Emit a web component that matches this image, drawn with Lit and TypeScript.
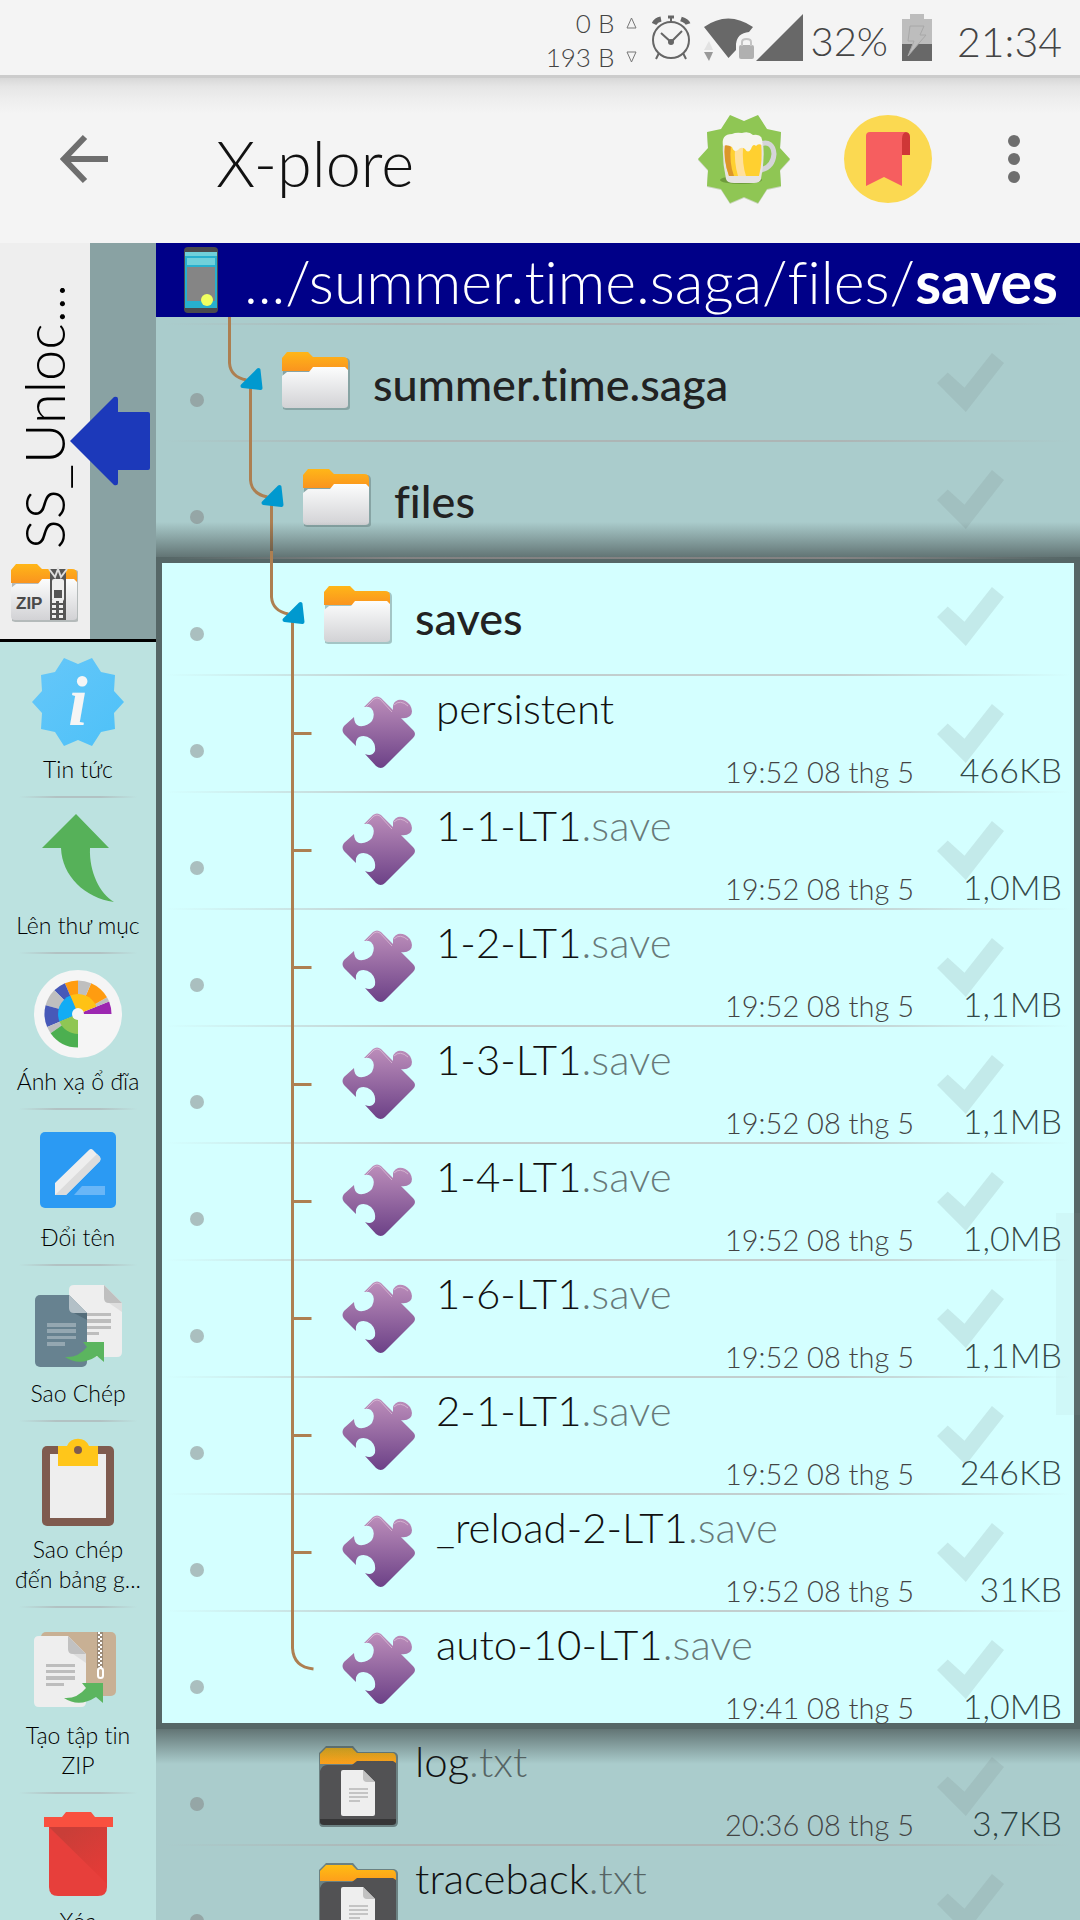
import { LitElement, html, svg, css, nothing } from "lit";
import { customElement, property } from "lit/decorators.js";

type Kind = "folder" | "puzzle" | "doc";
interface Entry {
  level: number;
  kind: Kind;
  name: string;
  ext?: string;
  date?: string;
  size?: string;
  line: "branch" | "tick" | "end" | "none";
}

const save = (name: string, size: string, date = "19:52 08 thg 5", line: Entry["line"] = "tick"): Entry => ({
  level: 3, kind: "puzzle", name, ext: ".save", date, size, line,
});

const parents: Entry[] = [
  { level: 0, kind: "folder", name: "summer.time.saga", line: "branch" },
  { level: 1, kind: "folder", name: "files", line: "branch" },
];
const current: Entry[] = [
  { level: 2, kind: "folder", name: "saves", line: "branch" },
  { level: 3, kind: "puzzle", name: "persistent", date: "19:52 08 thg 5", size: "466KB", line: "tick" },
  save("1-1-LT1", "1,0MB"),
  save("1-2-LT1", "1,1MB"),
  save("1-3-LT1", "1,1MB"),
  save("1-4-LT1", "1,0MB"),
  save("1-6-LT1", "1,1MB"),
  save("2-1-LT1", "246KB"),
  save("_reload-2-LT1", "31KB"),
  save("auto-10-LT1", "1,0MB", "19:41 08 thg 5", "end"),
];
const after: Entry[] = [
  { level: 2, kind: "doc", name: "log", ext: ".txt", date: "20:36 08 thg 5", size: "3,7KB", line: "none" },
  { level: 2, kind: "doc", name: "traceback", ext: ".txt", line: "none" },
];

const BADGE =
  "2,46 12,57 11,73 25,76 34,90 48,84 62,90 71,76 85,73 84,57 94,46 84,35 85,19 71,16 62,2 48,8 34,2 25,16 11,19 12,35";

/** Ring segment of the disk map, angles in degrees counter-clockwise from east. */
const wedge = (from: number, to: number, r: number, fill: string) => {
  const p = (a: number) =>
    `${(48 + r * Math.cos((a * Math.PI) / 180)).toFixed(1)} ${(46 - r * Math.sin((a * Math.PI) / 180)).toFixed(1)}`;
  return svg`<path fill=${fill} d="M48 46L${p(from)}A${r} ${r} 0 0 0 ${p(to)}Z"/>`;
};

const copyArrow = svg`<path fill="#5bb55f" d="M35 77Q48 78 57 67L53 62H74V82L67 76Q50 87 35 77Z"/>`;

const toolIcons: Record<string, unknown> = {
  info: svg`
    <defs><linearGradient id="g" x1="0" y1="0" x2="1" y2="1"><stop stop-color="#66c7f9"/><stop offset="1" stop-color="#4dc1f8"/></linearGradient></defs>
    <polygon points=${BADGE} fill="url(#g)"/>
    <text x="48" y="69" text-anchor="middle" font-family="Liberation Serif, serif" font-size="70" font-style="italic" font-weight="700" fill="#f5f5f5">i</text>`,
  up: svg`<path fill="#56b159" d="M46 2L79 36H60C59 60 70 82 84 90C55 86 32 64 31 36H12Z"/>`,
  map: svg`
    <circle cx="48" cy="46" r="44" fill="#f5f5f5"/>
    ${wedge(0, 22, 33.5, "#9c27b0")}${wedge(22, 30, 33.5, "#bfbfbf")}${wedge(30, 67, 33.5, "#ff9c10")}
    ${wedge(67, 90, 33.5, "#bfbfbf")}${wedge(90, 113, 33.5, "#ff9c10")}${wedge(113, 135, 33.5, "#4759b8")}
    ${wedge(135, 165, 33.5, "#bfbfbf")}${wedge(165, 203, 33.5, "#4759b8")}${wedge(203, 215, 33.5, "#bfbfbf")}
    ${wedge(215, 270, 33.5, "#4caf50")}${wedge(22, 113, 20, "#ffc215")}${wedge(113, 202, 20, "#12acf5")}
    ${wedge(202, 270, 20, "#8fc654")}
    <circle cx="48" cy="46" r="6" fill="#f5f5f5"/>`,
  rename: svg`
    <rect x="10" y="8" width="76" height="76" rx="5" fill="#2b9af3"/>
    <path fill="#eee" d="M25 71V59L59 26Q61 24 63 26L70 33Q71 35 70 37L36 71Z"/>
    <path fill="#dcdcdc" d="M25 71L67 30L70 33Q71 35 70 37L36 71Z"/>
    <path fill="#69b6f7" d="M44 71L52 62H75V71Z"/>`,
  copy: svg`
    <rect x="5" y="15" width="52" height="72" rx="5" fill="#678290"/>
    <path fill="#eee" d="M44 5H74L92 23V72Q92 77 87 77H57V33L39 15V10Q39 5 44 5Z"/>
    <path fill="#b3c0c7" d="M39 15L57 33H44Q39 33 39 28Z"/>
    <path fill="#546d7a" d="M44 33H57V40Z"/>
    <path fill="#bfbfbf" d="M74 5L92 23H79Q74 23 74 18Z"/>
    <path fill="#dedede" d="M79 23H92V32Z"/>
    <path fill="#94a7b1" d="M17 43h29v4H17zM17 49h29v4H17zM17 56h29v3H17zM17 62h18v4H17z"/>
    <path fill="#bdbdbd" d="M57 33h24v3H57zM57 39h24v4H57zM57 46h24v3H57zM57 52h12v3H57z"/>
    ${copyArrow}`,
  clip: svg`
    <rect x="12" y="10" width="72" height="80" rx="5" fill="#7f5b4f"/>
    <rect x="20" y="18" width="56" height="64" fill="#eee"/>
    <path fill="#ffc61a" d="M28 10H37A12 12 0 0 1 59 10H68V30H28Z"/>
    <circle cx="48" cy="14" r="4" fill="#7f5b4f"/>`,
  pack: svg`
    <rect x="11" y="10" width="75" height="64" rx="5" fill="#c8b094"/>
    <path d="M70 10V46" stroke="#9c8b78" stroke-width="6"/>
    <path d="M69 10V46" stroke="#fff" stroke-width="2" stroke-dasharray="2 2"/>
    <path d="M71 12V46" stroke="#fff" stroke-width="2" stroke-dasharray="2 2"/>
    <rect x="68" y="46" width="5" height="10" rx="2.5" fill="none" stroke="#fff" stroke-width="2"/>
    <path fill="#eee" d="M9 14H38L56 32V80Q56 85 51 85H9Q4 85 4 80V19Q4 14 9 14Z"/>
    <path fill="#c1c1c1" d="M38 14L56 32H43Q38 32 38 27Z"/>
    <path fill="#dedede" d="M43 32H56V41Z"/>
    <path fill="#bdbdbd" d="M16 42h29v3H16zM16 48h29v3H16zM16 54h29v4H16zM16 61h18v3H16z"/>
    <g transform="translate(-1 -1)">${copyArrow}</g>`,
  trash: svg`
    <defs><linearGradient id="s" x1="0.4" y1="0" x2="1" y2="0.8"><stop stop-color="#c93e38"/><stop offset="1" stop-color="#e53b37"/></linearGradient></defs>
    <path fill="#e73f3b" d="M19 18H77V79Q77 88 68 88H28Q19 88 19 79Z"/>
    <path fill="url(#s)" d="M19 19H77V76Z"/>
    <path fill="#f9503f" d="M14 9H32L36 4H61L65 9H83V19H14Z"/>`,
};

const tools = [
  ["info", "Tin tức"],
  ["up", "Lên thư mục"],
  ["map", "Ánh xạ ổ đĩa"],
  ["rename", "Đổi tên"],
  ["copy", "Sao Chép"],
  ["clip", "Sao chép đến bảng g..."],
  ["pack", "Tạo tập tin ZIP"],
  ["trash", "Xóa"],
];

const folderArt = svg`
  <path fill="#48585a" opacity=".35" d="M8 70V18H30L38 19H72Q75 20 75 24V68Q75 71 71 71H11Z"/>
  <path fill="url(#fo)" d="M7 36V19L12 13H33L38 18H68Q73 18 73 23V32H7Z"/>
  <path fill="url(#fw)" d="M7 37L12 33H34L38 28H70L73 31V66Q73 69 69 69H11Q7 69 7 65Z"/>`;

const folderGradients = svg`<defs>
  <linearGradient id="fo" x2="0" y2="1"><stop stop-color="#ffb618"/><stop offset="1" stop-color="#f98d20"/></linearGradient>
  <linearGradient id="fw" x2="0" y2="1"><stop stop-color="#fcfdfd"/><stop offset="1" stop-color="#d2d2d5"/></linearGradient>
</defs>`;

const fileIcons: Record<Kind, { box: string; art: unknown }> = {
  folder: { box: "1 3 80 81", art: svg`${folderGradients}${folderArt}` },
  puzzle: {
    box: "0 0 80 81",
    art: svg`
    <defs><linearGradient id="pz" x2="0" y2="1"><stop stop-color="#bd8fbb"/><stop offset="1" stop-color="#6c4187"/></linearGradient></defs>
    <path fill="url(#pz)" d="M25 14L34 5Q38 2 42 5L54 17Q53 9 59 7Q66 6 71 12Q75 19 71 23Q67 26 62 25L74 37Q78 41 74 45L46 73Q42 77 37 73L26 61Q33 64 36 58Q37 51 32 46Q26 41 20 44Q16 47 17 53L5 41Q2 37 5 33L15 24Q15 31 20 33Q28 34 33 28Q37 20 32 15Q29 13 25 14Z"/>
    <path fill="none" stroke="#d3b2d0" stroke-width="1" d="M27 14L35 6Q38 4 41 6L53 19M55 12Q61 6 69 13"/>`,
  },
  doc: {
    box: "0 0 80 81",
    art: svg`
    <defs><linearGradient id="dk" x2="0" y2="1"><stop stop-color="#ffbd12"/><stop offset="1" stop-color="#fd9020"/></linearGradient></defs>
    <path fill="#2c3638" opacity=".5" d="M1 7L8 0H35L40 6H76Q80 7 80 11V76Q80 81 75 81H5Q1 81 1 76Z"/>
    <path fill="url(#dk)" d="M2 26V8L8 2H34L39 7H74Q78 7 78 12V18H2Z"/>
    <path fill="#525254" d="M2 25Q4 19 9 19H34L39 15H75L78 17V73H2Z"/>
    <path fill="#363637" d="M2 73H78V76Q78 79 74 79H6Q2 79 2 76Z"/>
    <path fill="#eee" d="M25 24H45L57 36V68Q57 70 55 70H25Q23 70 23 68V26Q23 24 25 24Z"/>
    <path fill="#c1c1c1" d="M45 24L57 36H49Q45 36 45 32Z"/>
    <path fill="#c4c4c4" d="M31 42h19v2H31zM31 46h19v2H31zM31 50h19v2H31zM31 54h11v2H31z"/>`,
  },
};

@customElement("file-row")
class FileRow extends LitElement {
  @property({ attribute: false }) entry!: Entry;

  static styles = css`
    :host {
      display: flex;
      height: 117px;
      box-sizing: border-box;
      padding-top: 2px;
      flex: none;
      background: linear-gradient(90deg, transparent 1%, rgba(176, 158, 158, 0.5) 26%, rgba(176, 158, 158, 0.5) 74%, transparent 99%)
        0 0 / 100% 2px no-repeat;
    }
    .tree {
      flex: none;
      height: 117px;
      margin-top: -2px;
      overflow: visible;
    }
    .icon {
      flex: none;
      align-self: center;
      width: 80px;
      height: 81px;
      margin-right: 17px;
    }
    .text {
      flex: 1;
      min-width: 0;
      display: flex;
      flex-direction: column;
      justify-content: space-between;
      white-space: nowrap;
    }
    .name {
      font-size: 42px;
      line-height: 48px;
      padding-top: 8px;
      color: #111;
    }
    .ext {
      color: rgba(30, 30, 30, 0.6);
    }
    .folder {
      justify-content: center;
    }
    .folder .name {
      font-weight: 500;
      font-size: 45px;
      padding-top: 2px;
      color: #222;
    }
    .date {
      align-self: flex-end;
      font-size: 29px;
      line-height: 38px;
      color: #444;
    }
    .side {
      flex: none;
      display: grid;
      width: 166px;
      box-sizing: border-box;
      padding: 0 18px 0 23px;
    }
    .check {
      grid-area: 1 / 1;
      appearance: none;
      margin: 28px 0 0;
      width: 67px;
      height: 59px;
      background: rgba(120, 140, 140, 0.18);
      clip-path: polygon(0 51%, 16% 33%, 41% 59%, 82% 0, 100% 17%, 43% 100%);
    }
    .size {
      grid-area: 1 / 1;
      align-self: end;
      justify-self: end;
      font-size: 34px;
      line-height: 42px;
      color: rgba(20, 40, 40, 0.85);
    }
  `;

  private tree(e: Entry, w: number) {
    const x = 73.5 + 21 * e.level;
    const line = {
      branch: svg`
        <path d="M${x} -6V40Q${x + 1} 54 ${x + 17} 57"/>
        <path d="M${x + 21} 62V117"/>
        <path fill="#0099cf" stroke="#0099cf" stroke-width="4" stroke-linejoin="round" d="M${x + 13} 63L${x + 29} 47L${x + 31} 65Z"/>`,
      tick: svg`<path d="M${x} 0V117M${x} 59.5H${x + 19}"/>`,
      end: svg`<path d="M${x} 0V38Q${x + 1} 57 ${x + 21} 59"/>`,
      none: nothing,
    }[e.line];
    return html`<svg class="tree" width=${w} height="117" viewBox="0 0 ${w} 117" aria-hidden="true">
      <circle cx="41" cy="77" r="7" fill="rgba(128,128,128,.5)" />
      <g fill="none" stroke="#ad7f51" stroke-width="3">${line}</g>
    </svg>`;
  }

  render() {
    const e = this.entry;
    const icon = fileIcons[e.kind];
    return html`
      ${this.tree(e, 120 + e.level * 21)}
      <svg class="icon" viewBox=${icon.box} aria-hidden="true">${icon.art}</svg>
      <div class="text ${e.kind}">
        <span class="name">${e.name}<span class="ext">${e.ext ?? ""}</span></span>
        ${e.date ? html`<span class="date">${e.date}</span>` : nothing}
      </div>
      <div class="side">
        <input class="check" type="checkbox" aria-label=${e.name} />
        ${e.size ? html`<span class="size">${e.size}</span>` : nothing}
      </div>
    `;
  }
}

@customElement("app-root")
class AppRoot extends LitElement {
  static styles = css`
    :host {
      display: flex;
      flex-direction: column;
      height: 100vh;
      overflow: hidden;
      background: #f4f4f4;
      font-family: Lato, "Open Sans", sans-serif;
      font-weight: 300;
      font-variant-ligatures: none;
    }
    button {
      font: inherit;
      color: inherit;
      background: none;
      border: 0;
      padding: 0;
      margin: 0;
    }
    svg {
      display: block;
      flex: none;
    }
    .status {
      display: flex;
      align-items: center;
      justify-content: flex-end;
      height: 75px;
      flex: none;
      padding-right: 18px;
      border-bottom: 3px solid #ccc;
      color: #444;
      white-space: nowrap;
    }
    .net {
      display: grid;
      grid-template-columns: auto 11px;
      column-gap: 12px;
      align-items: center;
      justify-items: end;
      font-size: 26px;
      line-height: 34px;
      padding-top: 5px;
      margin-right: 15px;
    }
    .sysicons {
      margin-right: 6px;
    }
    .percent {
      font-size: 40px;
      line-height: 48px;
      padding-top: 6px;
      margin-right: 14px;
    }
    .clock {
      font-size: 41px;
      line-height: 52px;
      padding-top: 8px;
      margin-left: 25px;
    }
    .header {
      display: flex;
      align-items: center;
      height: 165px;
      flex: none;
      box-sizing: border-box;
      padding: 0 58px 4px 60px;
      background: linear-gradient(#d8d8d8, #e6e6e6 9px, #ededed 20px, #f4f4f4 35px);
    }
    .title {
      flex: 1;
      margin: 0 0 0 106px;
      padding-top: 8px;
      font-size: 63px;
      line-height: 72px;
      font-weight: 300;
      color: #111;
    }
    .actions {
      display: flex;
      align-items: center;
    }
    .beer {
      margin-right: 52px;
    }
    .mark {
      margin-right: 74px;
    }
    .body {
      flex: 1;
      min-height: 0;
      display: flex;
    }
    .left {
      width: 156px;
      flex: none;
      display: flex;
      flex-direction: column;
      overflow: hidden;
      background: #bce2e0;
    }
    .other {
      position: relative;
      flex: none;
      height: 396px;
      border-bottom: 3px solid #000;
      background: linear-gradient(90deg, #eee 90px, #89a2a3 90px);
    }
    .tab {
      width: 90px;
      height: 100%;
      box-sizing: border-box;
      padding: 0 2px 16px 0;
      display: flex;
      flex-direction: column;
      align-items: center;
      justify-content: flex-end;
      gap: 14px;
    }
    .tabname {
      writing-mode: vertical-rl;
      transform: rotate(180deg);
      font-size: 56px;
      line-height: 68px;
      color: #000;
      white-space: nowrap;
    }
    .swap {
      position: absolute;
      left: 70px;
      top: 153px;
    }
    .tools {
      display: flex;
      flex-direction: column;
    }
    .tool {
      display: flex;
      flex-direction: column;
      align-items: center;
      flex: none;
      gap: 6px;
      padding: 14px 12px;
      background: linear-gradient(90deg, transparent 12%, #b2c2c3 36%, #b2c2c3 64%, transparent 88%) 0 100% / 100% 2px
        no-repeat;
    }
    .label {
      font-size: 23px;
      line-height: 30px;
      color: #000;
    }
    .main {
      flex: 1;
      min-width: 0;
      display: flex;
      flex-direction: column;
      background: #aacccc;
      position: relative;
    }
    .path {
      display: flex;
      align-items: center;
      justify-content: space-between;
      height: 74px;
      flex: none;
      box-sizing: border-box;
      padding: 0 22px 0 28px;
      background: #000088;
      color: #fff;
      font-size: 59px;
      line-height: 74px;
      white-space: nowrap;
    }
    .crumbs {
      padding-top: 4px;
    }
    .crumbs b {
      font-weight: 700;
    }
    .list {
      flex: 1;
      min-height: 0;
      overflow: hidden;
      display: flex;
      flex-direction: column;
      padding-top: 6px;
    }
    .group {
      position: relative;
      z-index: 0;
      display: flex;
      flex-direction: column;
      flex: none;
    }
    .group::before {
      content: "";
      position: absolute;
      z-index: -1;
      inset: 0 0 -2px 0;
      border: 6px solid #566767;
      background: #d4ffff;
      box-sizing: border-box;
    }
    .group::after {
      content: "";
      position: absolute;
      z-index: -2;
      inset: -35px 0 -37px 0;
      background: linear-gradient(rgba(60, 70, 70, 0), rgba(60, 70, 70, 0.65) 35px) 0 0 / 100% 35px no-repeat,
        linear-gradient(rgba(60, 70, 70, 0.65), rgba(60, 70, 70, 0)) 0 100% / 100% 35px no-repeat;
    }
    .thumb {
      position: absolute;
      right: 0;
      top: 970px;
      width: 24px;
      height: 202px;
      background: rgba(150, 170, 170, 0.08);
    }
  `;

  render() {
    const rows = (list: Entry[]) => list.map((e) => html`<file-row .entry=${e}></file-row>`);
    return html`
      <div class="status">
        <div class="net">
          <span>0 B</span>
          <svg width="11" height="12" viewBox="0 0 11 12"><path d="M1 11L5.500 1L10 11Z" fill="none" stroke="#777" /></svg>
          <span>193 B</span>
          <svg width="11" height="12" viewBox="0 0 11 12"><path d="M1 1L5.500 11L10 1Z" fill="none" stroke="#777" /></svg>
        </div>
        <svg class="sysicons" width="152" height="50" viewBox="653 13 152 50" aria-hidden="true">
          <g fill="none" stroke="#666" stroke-width="2">
            <circle cx="672" cy="40" r="18" />
            <path d="M662 33L672 42L683 31" stroke-width="2" />
            <path d="M672 17V22M660 53L657 59M684 53L687 59" />
            <path d="M669 17H675" stroke-width="3" />
            <path d="M655 24Q657 20 662 19M682 19Q688 21 689 24" stroke-width="5" />
          </g>
          <circle cx="672" cy="42" r="3" fill="#666" />
          <path fill="#686868" d="M705 27Q729 10 754 27L750 32Q738 33 737 44V50L729.500 58Z" />
          <path fill="#e2e2e2" d="M705 50L710 41L714 50Z" />
          <path fill="#999" d="M705 52H714L710 61Z" />
          <rect x="740" y="45" width="15" height="14" rx="2" fill="#b0b0b0" />
          <path d="M743 46V42Q743 39 747.500 39Q752 39 752 42V46" fill="none" stroke="#c4c4c4" stroke-width="2" />
          <path fill="#686868" d="M757 61L804 14V61Z" />
        </svg>
        <span class="percent">32%</span>
        <svg width="30" height="48" viewBox="0 0 30 48" aria-hidden="true">
          <path fill="#bdbdbd" d="M0 5H8V0H22V5H30V31H0Z" />
          <path fill="#686868" d="M0 30H30V47H0Z" />
          <path fill="#bdbdbd" stroke="#a8a8a8" d="M8 12H22L18 21H24L6 42L12 27H6Z" />
        </svg>
        <span class="clock">21:34</span>
      </div>

      <header class="header">
        <button aria-label="Back">
          <svg width="50" height="50" viewBox="0 0 50 50">
            <path d="M25 3L4 25L25 47M4 25H48" fill="none" stroke="#6e6e6e" stroke-width="6" />
          </svg>
        </button>
        <h1 class="title">X-plore</h1>
        <div class="actions">
          <button class="beer" aria-label="Donate">
            <svg width="96" height="92" viewBox="0 0 96 92">
              <polygon points=${BADGE} fill="#5f8a33" opacity=".3" transform="translate(0 1)" />
              <polygon points=${BADGE} fill="#8fc654" />
              <ellipse cx="45" cy="67" rx="21" ry="4" fill="#6e9c3c" />
              <path d="M64 31Q77 27 78 41Q77 54 65 57" fill="none" stroke="#d5d5d8" stroke-width="5" />
              <path d="M27 30H67Q69 46 65 66Q64 70 58 70H38Q31 70 30 66Q26 48 27 30Z" fill="#e6e4e2" />
              <path d="M29 30H65Q67 47 63 63H33Q27 46 29 30Z" fill="#ffd030" />
              <path d="M29 32H35Q33 50 38 63H33Q27 46 29 32Z" fill="#dc962a" />
              <path d="M39 34H47Q46 51 50 63H42Q38 50 39 34Z" fill="#ffe09c" />
              <path d="M27 33Q25 21 36 21Q40 19 46 20Q53 18 57 22Q68 20 66 32Q62 30 60 33Q57 30 55 36Q52 41 49 36Q45 33 42 37Q38 40 36 34Q31 31 27 33Z" fill="#f6f5ef" />
            </svg>
          </button>
          <button class="mark" aria-label="Bookmarks">
            <svg width="88" height="88" viewBox="0 0 88 88">
              <circle cx="44" cy="44" r="44" fill="#fbd951" />
              <path d="M56 17H61Q66 17 66 22V40H56Z" fill="#cf3737" />
              <path d="M22 71V21Q22 17 26 17H62Q58 18 58 24V71L40 62Z" fill="#f65e5f" />
            </svg>
          </button>
          <button aria-label="Menu">
            <svg width="16" height="52" viewBox="0 0 16 52">
              <g fill="#6e6e6e"><circle cx="8" cy="8" r="6" /><circle cx="8" cy="26" r="6" /><circle cx="8" cy="44" r="6" /></g>
            </svg>
          </button>
        </div>
      </header>

      <div class="body">
        <aside class="left">
          <div class="other">
            <div class="tab">
              <span class="tabname">SS_Unloc...</span>
              <svg width="68" height="60" viewBox="6 12 68 60" aria-hidden="true">
                ${folderGradients}${folderArt}
                <rect x="46" y="18" width="16" height="51" fill="#555" />
                <path d="M50 44V69M57 44V69" stroke="#eee" stroke-width="4" stroke-dasharray="3 2" />
                <path d="M45 18L51 26L54 18L57 26L63 18" fill="none" stroke="#ddd" stroke-width="2" />
                <rect x="48" y="28" width="12" height="22" rx="2" fill="#eee" />
                <rect x="50" y="39" width="8" height="8" fill="#555" />
                <text x="12" y="58" font-family="Liberation Sans, sans-serif" font-weight="700" font-size="17" fill="#4a4a4a">ZIP</text>
              </svg>
            </div>
            <button class="swap" aria-label="Switch pane">
              <svg width="80" height="90" viewBox="0 0 80 90">
                <path fill="#1c39ba" d="M0 45L44 1Q48 0 48 3V16H78Q80 16 80 18V72Q80 74 78 74H48V87Q48 90 44 89Z" />
              </svg>
            </button>
          </div>
          <nav class="tools">
            ${tools.map(
              ([icon, label]) => html`<button class="tool">
                <svg width="96" height="92" viewBox="0 0 96 92" aria-hidden="true">${toolIcons[icon]}</svg>
                <span class="label">${label}</span>
              </button>`
            )}
          </nav>
        </aside>

        <main class="main">
          <div class="path">
            <svg width="34" height="66" viewBox="0 0 34 66" aria-hidden="true">
              <rect width="34" height="66" rx="4" fill="#4a4a4c" />
              <rect x="1" y="5" width="32" height="56" fill="#27b0ce" />
              <rect x="1" y="5" width="32" height="4" fill="#70d0da" />
              <rect x="3" y="11" width="28" height="7" fill="#70d0da" />
              <rect x="3" y="20" width="28" height="34" fill="#858585" />
              <circle cx="23" cy="53" r="6" fill="#f0ff60" />
            </svg>
            <span class="crumbs">.../summer.time.saga/files/<b>saves</b></span>
          </div>
          <div class="list">
            ${rows(parents)}
            <div class="group">${rows(current)}</div>
            ${rows(after)}
          </div>
          <div class="thumb"></div>
        </main>
      </div>
    `;
  }
}
